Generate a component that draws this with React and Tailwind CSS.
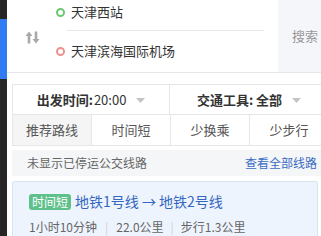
import React from 'react';

const font = { fontFamily: '"Noto Sans CJK SC", "Noto Sans", sans-serif' };

const Caret = () => (
  <svg width="9" height="5" viewBox="0 0 9 5" className="ml-[10px] mt-[2px]">
    <path d="M0 0h9L4.5 5z" fill="#c4c4c4" />
  </svg>
);

const SwapIcon = () => (
  <svg width="15" height="13" viewBox="0 0 15 13">
    <path d="M4 0.5L7.5 5H5.3v7.5H2.7V5H0.5z" fill="#a9a9a9" />
    <path d="M11 12.5L14.5 8H12.3V0.5H9.7V8H7.5z" fill="#a9a9a9" />
  </svg>
);

const StationRow = ({ color, name }) => (
  <div className="flex items-center h-[26px]">
    <span
      className="w-[9px] h-[9px] rounded-full border-2 box-border"
      style={{ borderColor: color }}
    />
    <span className="ml-[6px] text-[13px] text-[#333]">{name}</span>
  </div>
);

const tabs = ['推荐路线', '时间短', '少换乘', '少步行'];

export default function App() {
  return (
    <div className="w-[321px] h-[236px] overflow-hidden flex bg-white" style={font}>
      <div className="w-[7px] shrink-0 bg-[#262626] flex flex-col">
        <div className="h-[19px]" />
        <div className="h-[60px] bg-[#2f7cf6]" />
      </div>
      <div className="flex-1 flex flex-col min-w-0">
        <div className="flex h-[73px] border-b border-[#e6e6e6]">
          <div className="w-[48px] flex items-center justify-center pl-[2px] pt-[2px]">
            <SwapIcon />
          </div>
          <div className="w-[223px] flex flex-col pl-[1px]">
            <div className="-mt-[1px]">
              <StationRow color="#6cc870" name="天津西站" />
            </div>
            <div className="h-[1px] bg-[#e8e8e8] ml-[11px] mr-[14px] mt-[5px]" />
            <div className="mt-[7px]">
              <StationRow color="#ee9090" name="天津滨海国际机场" />
            </div>
          </div>
          <div className="flex-1 bg-[#f5f6fa] h-[72px] flex items-center pl-[14px] text-[13px] text-[#999]">
            搜索
          </div>
        </div>

        <div className="pl-[5px] pt-[11px]">
          <div className="w-[320px] border border-[#e6e6e6]">
            <div className="flex h-[30px] border-b border-[#e6e6e6]">
              <div className="w-[157px] flex items-center justify-center border-r border-[#e6e6e6] text-[13px] text-[#333]">
                <span className="font-bold">出发时间:</span>
                <span className="ml-[1px]">20:00</span>
                <Caret />
              </div>
              <div className="w-[158px] flex items-center justify-center text-[13px] text-[#333]">
                <span className="font-bold">交通工具: 全部</span>
                <Caret />
              </div>
            </div>
            <div className="flex h-[30px]">
              {tabs.map((t, i) => (
                <div
                  key={t}
                  className={
                    'w-[79px] flex items-center justify-center text-[13px] text-[#555] border-r border-[#e6e6e6] ' +
                    (i === 0 ? 'bg-[#f5f5f5]' : 'bg-white')
                  }
                >
                  {t}
                </div>
              ))}
            </div>
          </div>

          <div className="mt-[4px] h-[26px] bg-[#f5f6f8] flex items-center justify-between pl-[15px] pr-[4px] text-[12px]">
            <span className="text-[#666]">未显示已停运公交线路</span>
            <span className="text-[#3a6cc4]">查看全部线路</span>
          </div>

          <div className="mt-[5px] w-[306px] h-[80px] bg-[#eef4fd] border border-[#d9e4f3] rounded-[2px] pl-[16px] pt-[11px]">
            <div className="flex items-center h-[17px]">
              <span className="bg-[#5ec08a] text-white text-[12px] leading-[16px] px-[3px] rounded-[3px]">
                时间短
              </span>
              <span className="ml-[4px] text-[14px] text-[#3467bf]">地铁1号线 → 地铁2号线</span>
            </div>
            <div className="flex items-center mt-[8px] text-[12px] text-[#666]">
              <span>1小时10分钟</span>
              <span className="mx-[8px] text-[#d0d0d0]">|</span>
              <span>22.0公里</span>
              <span className="mx-[7px] text-[#d0d0d0]">|</span>
              <span>步行1.3公里</span>
            </div>
          </div>
        </div>
      </div>
    </div>
  );
}
